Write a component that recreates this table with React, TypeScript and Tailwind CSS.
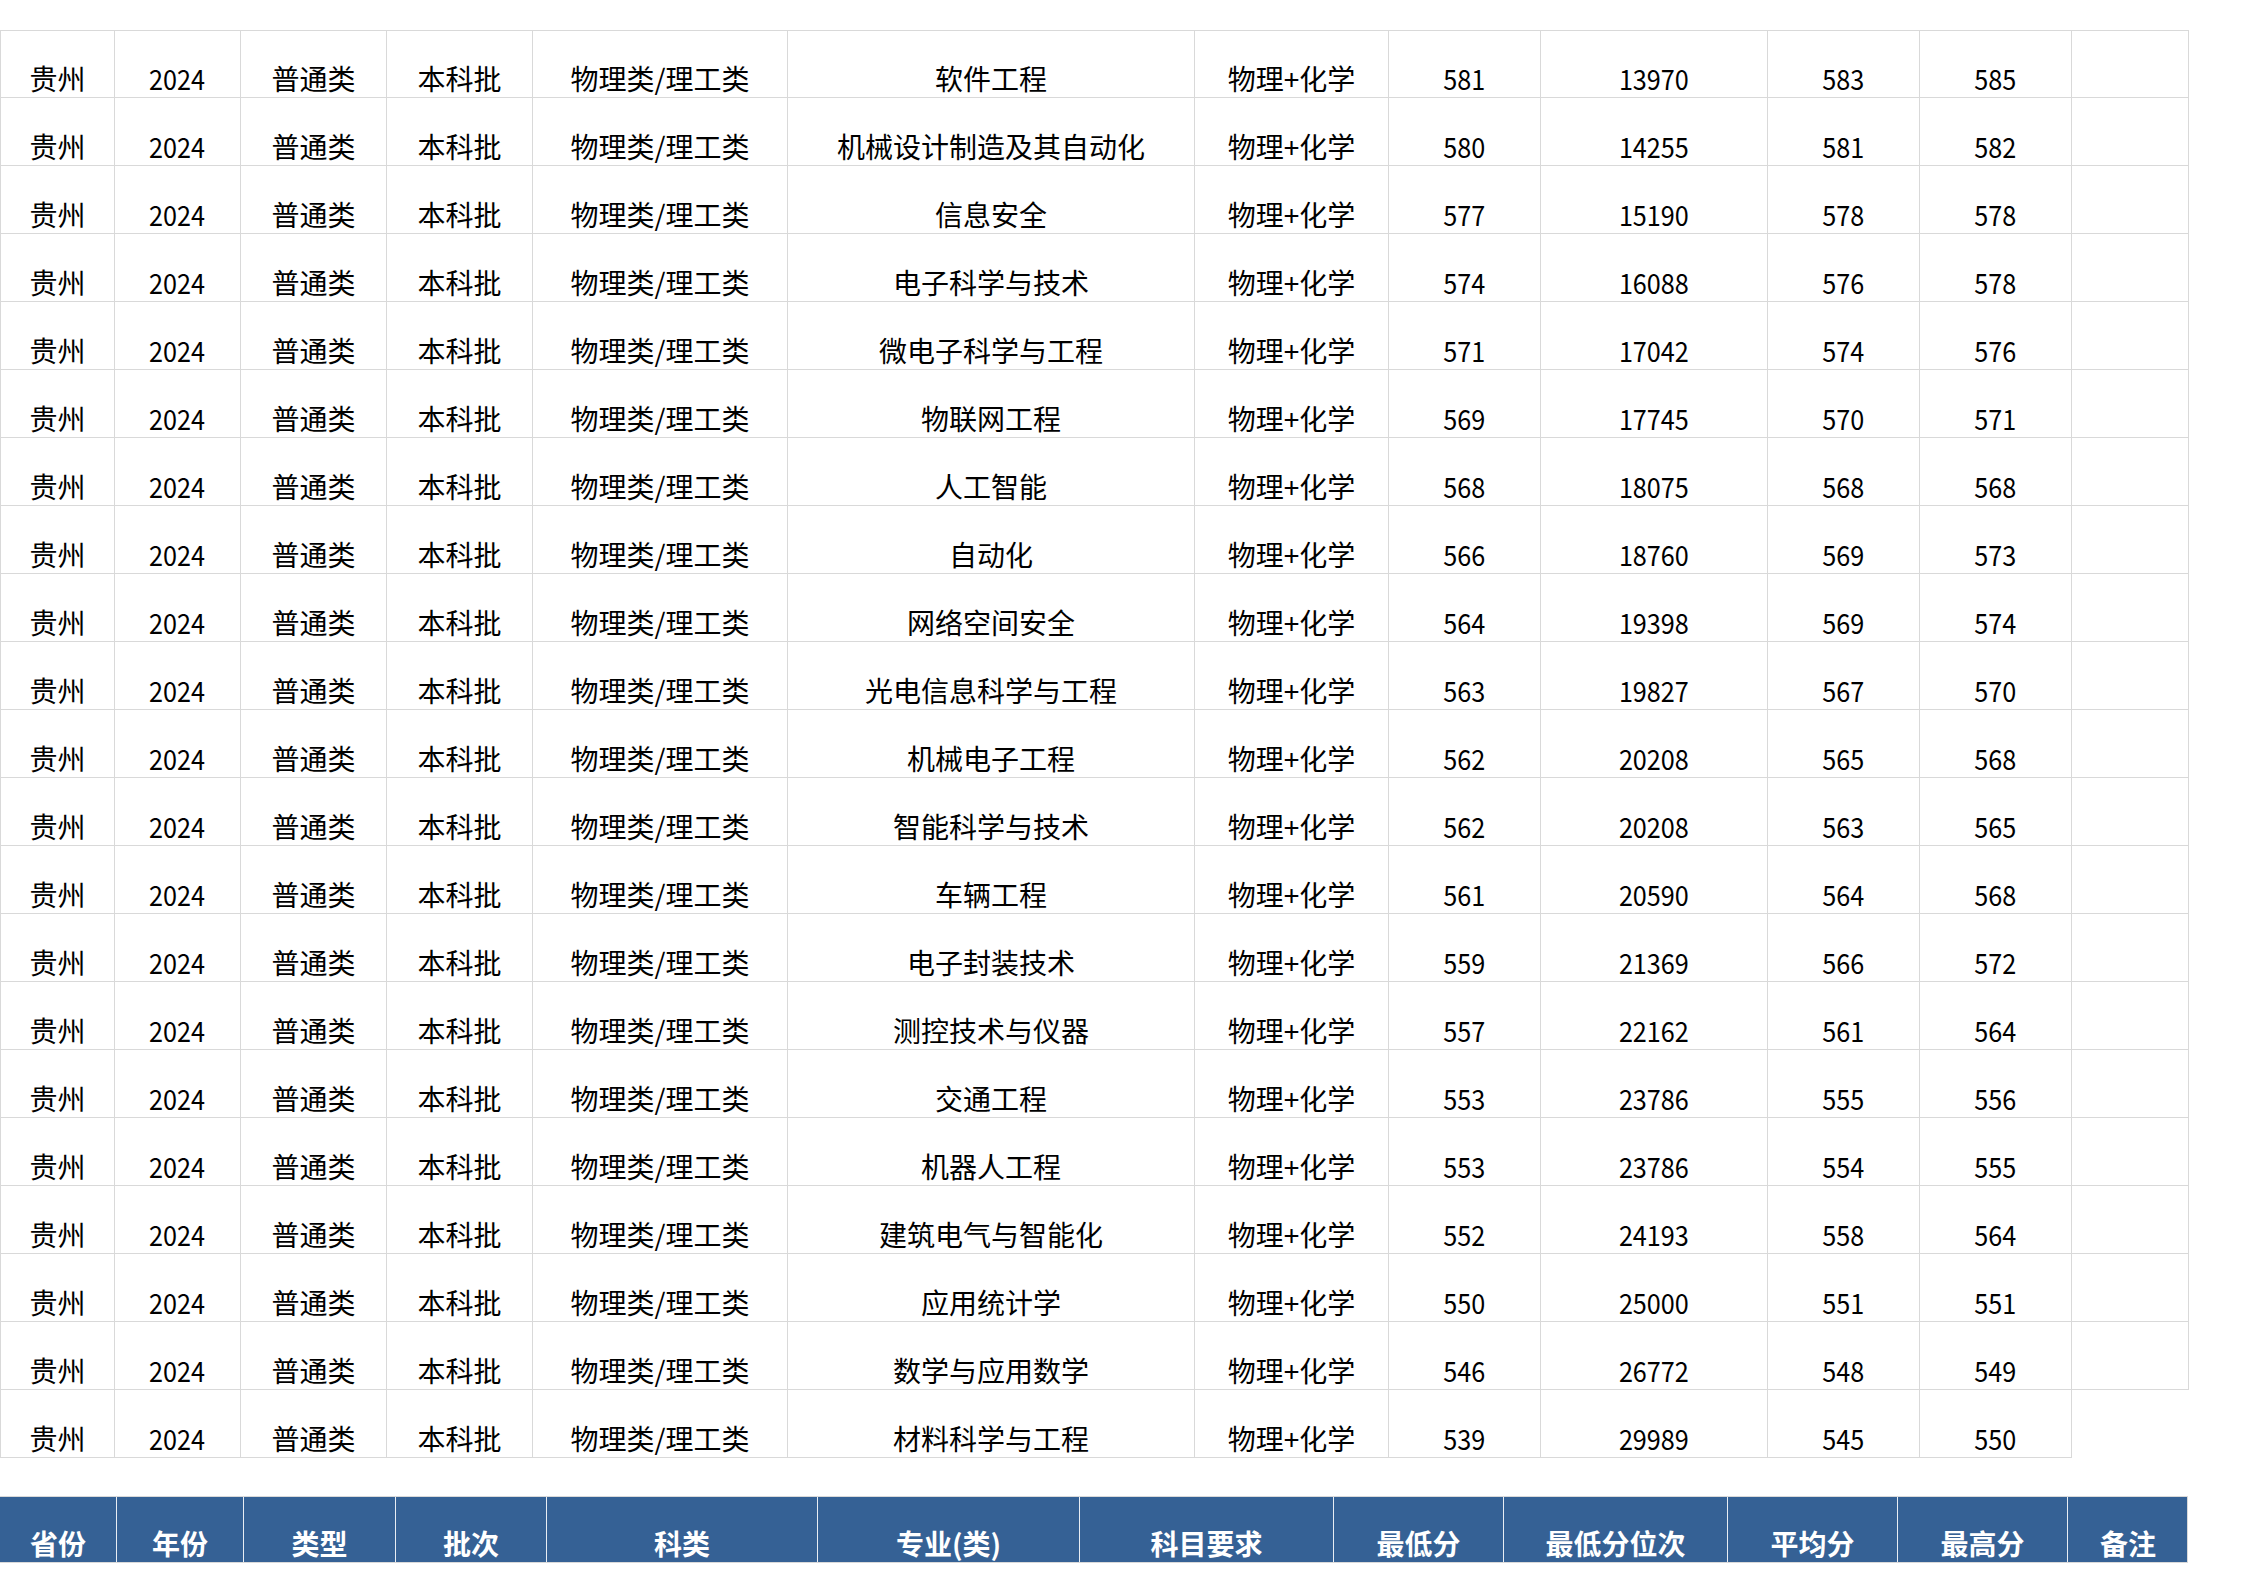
import React from "react";

const rows: [string, string, string, string, string][] = [
  ["软件工程", "581", "13970", "583", "585"],
  ["机械设计制造及其自动化", "580", "14255", "581", "582"],
  ["信息安全", "577", "15190", "578", "578"],
  ["电子科学与技术", "574", "16088", "576", "578"],
  ["微电子科学与工程", "571", "17042", "574", "576"],
  ["物联网工程", "569", "17745", "570", "571"],
  ["人工智能", "568", "18075", "568", "568"],
  ["自动化", "566", "18760", "569", "573"],
  ["网络空间安全", "564", "19398", "569", "574"],
  ["光电信息科学与工程", "563", "19827", "567", "570"],
  ["机械电子工程", "562", "20208", "565", "568"],
  ["智能科学与技术", "562", "20208", "563", "565"],
  ["车辆工程", "561", "20590", "564", "568"],
  ["电子封装技术", "559", "21369", "566", "572"],
  ["测控技术与仪器", "557", "22162", "561", "564"],
  ["交通工程", "553", "23786", "555", "556"],
  ["机器人工程", "553", "23786", "554", "555"],
  ["建筑电气与智能化", "552", "24193", "558", "564"],
  ["应用统计学", "550", "25000", "551", "551"],
  ["数学与应用数学", "546", "26772", "548", "549"],
  ["材料科学与工程", "539", "29989", "545", "550"],
];

const headers = ["省份", "年份", "类型", "批次", "科类", "专业(类)", "科目要求", "最低分", "最低分位次", "平均分", "最高分", "备注"];

function Cell({ children, top, left, num }: { children?: React.ReactNode; top?: boolean; left?: boolean; num?: boolean }) {
  return (
    <div
      className={
        "flex h-[68px] items-end justify-center border-r border-b border-[#d9d9d9] pb-[5px] text-[28px] leading-[28px] whitespace-nowrap text-black " +
        (top ? "border-t " : "") +
        (left ? "border-l " : "")
      }
    >
      {num ? <span className="inline-block scale-x-90">{children}</span> : children}
    </div>
  );
}

export default function App() {
  return (
    <div
      className="w-[2245px] h-[1587px] overflow-hidden bg-white pt-[30px]"
      style={{ fontFamily: '"Noto Sans CJK SC", "Noto Sans", sans-serif' }}
    >
      <div className="flex flex-col">
        {rows.map((r, i) => {
          const last = i === rows.length - 1;
          const t = i === 0;
          return (
            <div
              key={i}
              className="grid grid-cols-[115px_126px_146px_146px_255px_407px_194px_152px_227px_152px_152px_117px]"
            >
              <Cell top={t} left>贵州</Cell>
              <Cell top={t} num>2024</Cell>
              <Cell top={t}>普通类</Cell>
              <Cell top={t}>本科批</Cell>
              <Cell top={t}>物理类/理工类</Cell>
              <Cell top={t}>{r[0]}</Cell>
              <Cell top={t}>物理+化学</Cell>
              <Cell top={t} num>{r[1]}</Cell>
              <Cell top={t} num>{r[2]}</Cell>
              <Cell top={t} num>{r[3]}</Cell>
              <Cell top={t} num>{r[4]}</Cell>
              {last ? null : <Cell top={t} />}
            </div>
          );
        })}
      </div>

      <div className="mt-[38px] grid w-[2188px] grid-cols-[117px_127px_152px_151px_271px_262px_254px_170px_224px_170px_170px_120px] border-y border-r border-[#d9d9d9] bg-[#356195]">
        {headers.map((h, i) => (
          <div
            key={h}
            className={
              "flex h-[65px] items-end justify-center pb-[5px] text-[28px] leading-[28px] font-bold text-white whitespace-nowrap " +
              (i === headers.length - 1 ? "" : "border-r border-[#e8edf4]")
            }
          >
            {h}
          </div>
        ))}
      </div>
    </div>
  );
}
